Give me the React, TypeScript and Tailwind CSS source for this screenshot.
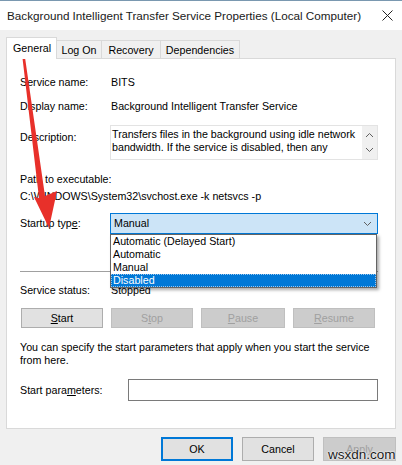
import React from "react";

const font = { fontFamily: '"Liberation Sans", Arial, sans-serif' };

function U({ children }: { children: React.ReactNode }) {
  return <span className="underline underline-offset-[1px]">{children}</span>;
}

function Chevron({ up = false }: { up?: boolean }) {
  return (
    <svg width="9" height="6" viewBox="0 0 9 6" className="block">
      <path d={up ? "M1 5 L4.5 1.5 L8 5" : "M1 1 L4.5 4.5 L8 1"} fill="none" stroke="#606060" strokeWidth="1" />
    </svg>
  );
}

function Btn({ children, disabled = false, w = "w-[82px]" }: { children: React.ReactNode; disabled?: boolean; w?: string }) {
  return (
    <div className={`${w} h-[20px] flex items-center justify-center border ${disabled ? "bg-[#cccccc] border-[#bfbfbf] text-[#a0a0a0]" : "bg-[#e1e1e1] border-[#adadad] text-black"}`}>
      {children}
    </div>
  );
}

const tabs = [
  { label: "Log On", w: "w-[45px]" },
  { label: "Recovery", w: "w-[59px]" },
  { label: "Dependencies", w: "w-[79px]" },
];

const options = ["Automatic (Delayed Start)", "Automatic", "Manual", "Disabled"];

export default function App() {
  return (
    <div style={font} className="relative w-[402px] h-[465px] overflow-hidden bg-[#f0f0f0] text-[10.7px] text-black leading-none">
      {/* title bar */}
      <div className="h-[30px] bg-white border-t border-[#7a98b0] flex items-center justify-between pl-[7px] pr-[9px]">
        <span className="text-[11.7px] text-[#1a1a1a]">Background Intelligent Transfer Service Properties (Local Computer)</span>
        <svg width="11" height="11" viewBox="0 0 11 11">
          <path d="M0.5 0.5 L10.5 10.5 M10.5 0.5 L0.5 10.5" stroke="#222" strokeWidth="1" />
        </svg>
      </div>

      {/* tabs */}
      <div className="flex items-end px-[6px] pt-[7px] h-[28px]">
        <div className="w-[51px] h-[22px] bg-white border border-b-0 border-[#d9d9d9] flex items-center pl-[6px] pb-[1px] relative z-10 mb-[-1px] h-[22px]">General</div>
        {tabs.map((t) => (
          <div key={t.label} className={`${t.w} h-[18px] bg-[#f0f0f0] border border-l-0 border-b-0 border-[#d9d9d9] flex items-center justify-center pt-[1px]`}>
            {t.label}
          </div>
        ))}
      </div>

      {/* panel */}
      <div className="mx-[6px] h-[371px] bg-white border border-[#d9d9d9] pl-[13px] pr-[17px] flex flex-col">
        <div className="mt-[15px] h-[16px] flex items-center">
          <span className="w-[91px]">Service name:</span>
          <span>BITS</span>
        </div>
        <div className="mt-[8px] h-[16px] flex items-center">
          <span className="w-[91px]">Display name:</span>
          <span>Background Intelligent Transfer Service</span>
        </div>
        <div className="mt-[11px] flex">
          <span className="w-[90px] pt-[7px]">Description:</span>
          <div className="flex-1 h-[35px] border border-[#e3e3e3] flex">
            <div className="flex-1 pl-[1px] pt-[2px] leading-[13px]">
              Transfers files in the background using idle network bandwidth. If the service is disabled, then any
            </div>
            <div className="w-[15px] bg-[#f0f0f0] flex flex-col items-center justify-between py-[6px]">
              <Chevron up />
              <Chevron />
            </div>
          </div>
        </div>
        <div className="mt-[11px] h-[16px] flex items-center">Path to executable:</div>
        <div className="mt-[1px] h-[16px] flex items-center">C:\WINDOWS\System32\svchost.exe -k netsvcs -p</div>
        <div className="mt-[9px] flex items-center">
          <span className="w-[90px]">
            Startup typ<U>e</U>:
          </span>
          <div className="relative flex-1">
            <div className="h-[21px] bg-[#cce4f7] border border-[#0078d7] flex items-center justify-between pl-[3px] pr-[5px]">
              <span>Manual</span>
              <Chevron />
            </div>
            <div className="absolute left-0 top-full w-[267px] bg-white border border-[#646464] shadow-[2px_2px_3px_rgba(0,0,0,0.35)] z-20">
              {options.map((o, i) => (
                <div
                  key={o}
                  className={`h-[13px] flex items-center pl-[2px] ${i === 3 ? "bg-[#0078d7] text-white outline-1 outline-dotted outline-[#9cc6ec] -outline-offset-1" : ""}`}
                >
                  {o}
                </div>
              ))}
            </div>
          </div>
        </div>
        <div className="mt-[37px] h-px bg-[#a0a0a0]" />
        <div className="mt-[10px] h-[16px] flex items-center">
          <span className="w-[91px]">Service status:</span>
          <span>Stopped</span>
        </div>
        <div className="mt-[10px] flex gap-[8px] pl-[1px]">
          <Btn>
            <U>S</U>tart
          </Btn>
          <Btn disabled>
            S<U>t</U>op
          </Btn>
          <Btn disabled w="w-[84px]">
            <U>P</U>ause
          </Btn>
          <Btn disabled>
            <U>R</U>esume
          </Btn>
        </div>
        <div className="mt-[13px] leading-[13px]">
          You can specify the start parameters that apply when you start the service from here.
        </div>
        <div className="mt-[12px] flex items-center">
          <span className="w-[108px]">
            Start para<U>m</U>eters:
          </span>
          <div className="flex-1 h-[22px] border border-[#7a7a7a]" />
        </div>
      </div>

      {/* dialog buttons */}
      <div className="flex justify-end gap-[9px] pr-[6px] mt-[8px]">
        <div className="w-[72px] h-[24px] bg-[#e1e1e1] border-2 border-[#0078d7] flex items-center justify-center">OK</div>
        <div className="w-[72px] h-[24px] bg-[#e1e1e1] border border-[#adadad] flex items-center justify-center">Cancel</div>
        <div className="w-[73px] h-[24px] bg-[#cccccc] border border-[#bfbfbf] text-[#a0a0a0] flex items-center justify-center">Apply</div>
      </div>

      {/* watermark */}
      <div className="absolute left-[328px] top-[448px] text-[13.5px] text-[#1a1a1a] [text-shadow:0_0_2px_#fff,0_0_2px_#fff]">wsxdn.com</div>

      {/* red annotation arrow */}
      <svg className="absolute inset-0 pointer-events-none" width="402" height="465" viewBox="0 0 402 465">
        <polygon points="22,54 24.5,54 45,196 57,191 49,228 34,197 39,198" fill="#e8302a" />
      </svg>
    </div>
  );
}
